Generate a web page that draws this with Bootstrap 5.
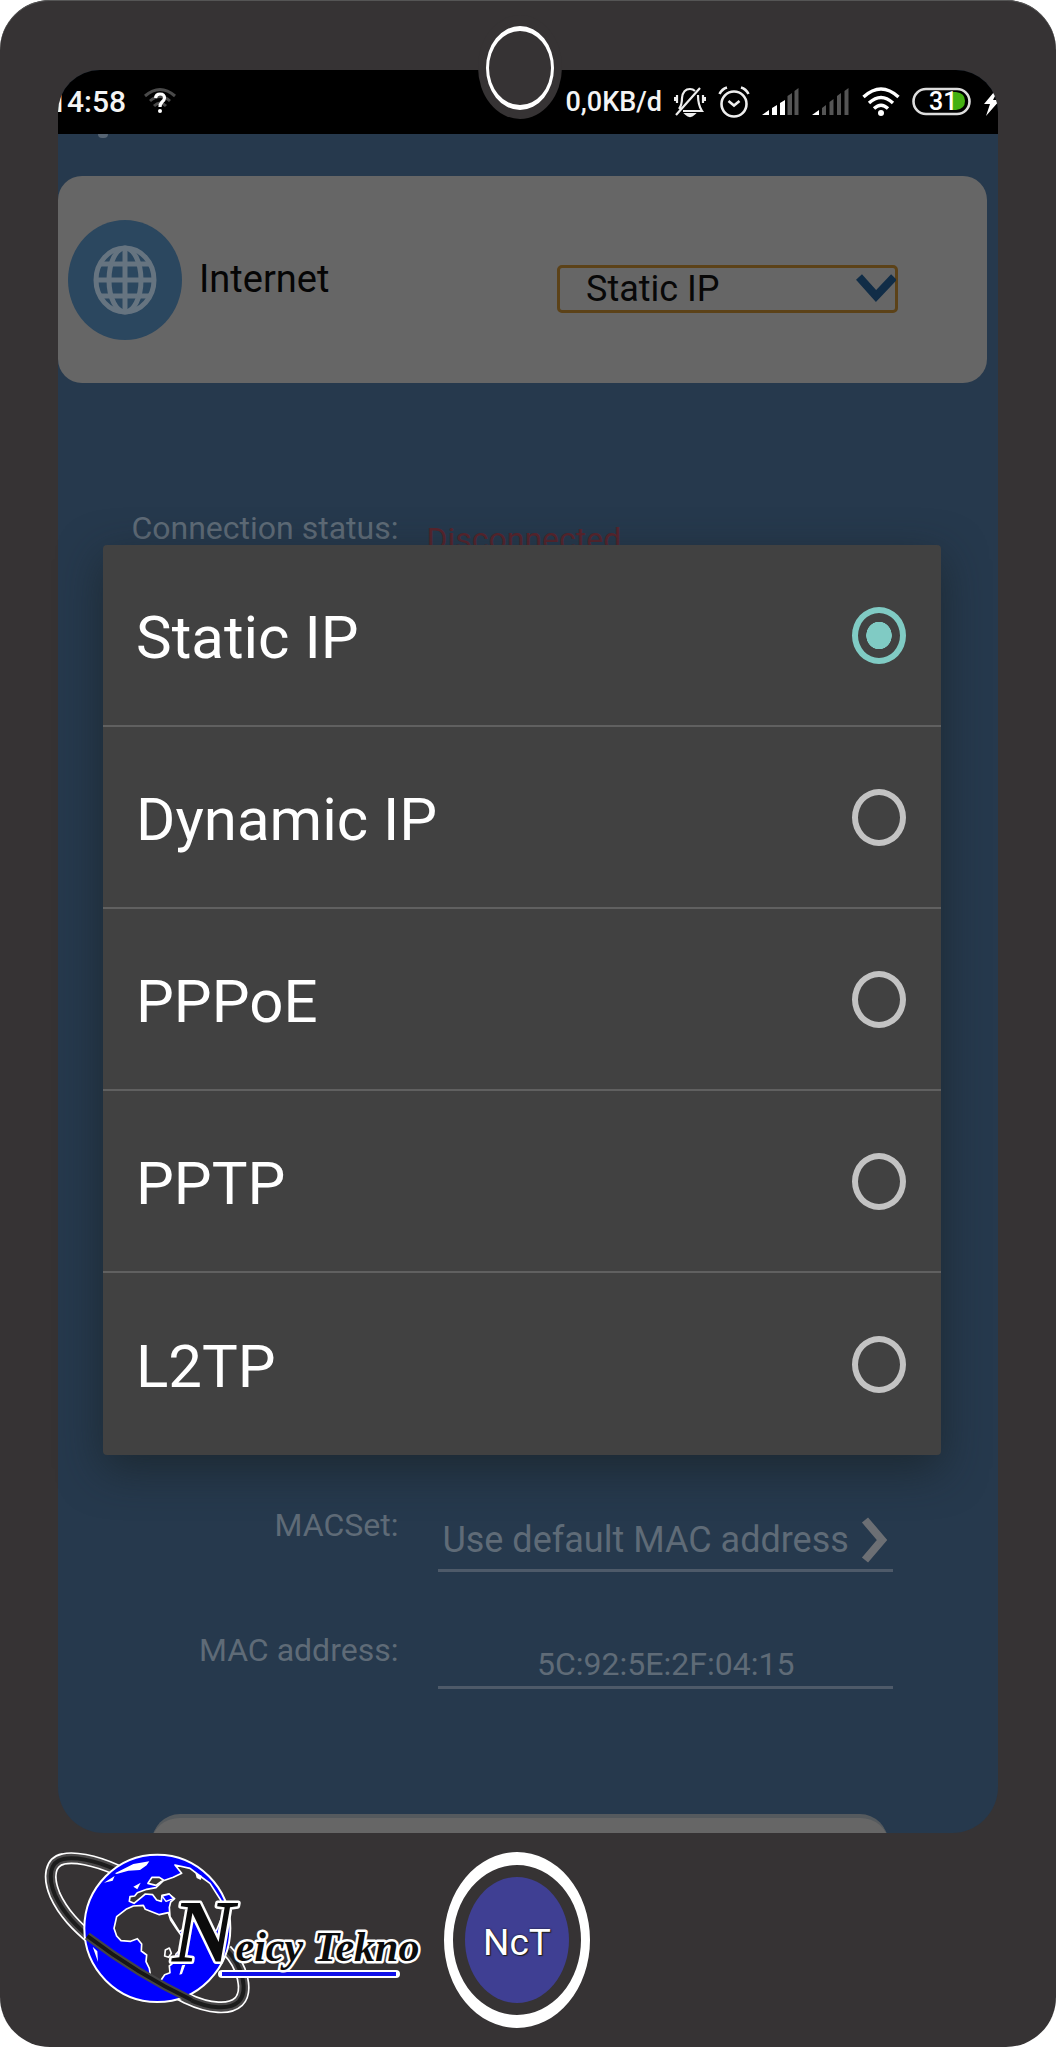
<!DOCTYPE html>
<html lang="en">
<head>
<meta charset="utf-8">
<meta name="viewport" content="width=device-width, initial-scale=1">
<title>Internet settings</title>
<link rel="stylesheet" href="https://cdn.jsdelivr.net/npm/bootstrap@5.3.0/dist/css/bootstrap.min.css">
<style>
body{background:#fff;font-family:Roboto,"Liberation Sans",sans-serif;margin:0}
.phone{background:#363334;border-radius:50px;padding:70px 58px 0;box-shadow:inset 0 1px #555;min-height:2047px}
.screen{background:#26394d;border-radius:42px 42px 46px 46px;overflow:hidden;height:1763px}
.statusbar{background:#000;height:64px;color:#f4f4f4;font-size:27px;font-weight:500;line-height:32px}
.clock{margin-left:-8px;font-size:30px}
.icons{gap:12px}
.lens{width:84px;height:104px;top:15px;left:calc(50% - 50px);border-radius:50%;background:#363334;padding:11px 8px 9px}
.lens-ring{border:solid #fff;border-width:5px 3px;border-radius:50%;height:84px}
.back-tip{width:10px;height:4px;margin-left:40px;border-radius:0 0 5px 5px;background:#566473}
.panel{background:#666;border-radius:24px;margin:38px 11px 0 0;height:207px;padding:0 89px 0 10px}
.globe-badge{width:114px;height:120px;border-radius:50%;background:#2b475f}
.title-text{font-size:38px;line-height:44px;color:#050505;margin:-2px 0 0 17px;font-weight:400}
.mode-select{width:341px;margin-top:18px}
.mode-select select{height:48px;font-size:36px;line-height:40px;padding:0 0 0 26px;background:transparent;border:3px solid #5c4218;border-radius:5px;color:#080808;appearance:none}
.mode-select svg{right:2px;top:9px}
.form-line{display:grid;grid-template-columns:340fr 454fr;column-gap:40px;padding-right:105px}
.form-line label,.form-line .cap{font-size:32px;line-height:38px;color:#5f6b77;text-align:right}
.first-line{grid-template-columns:340fr 466fr;column-gap:28px;margin-top:126px;height:997px}
.state{font-size:32px;line-height:38px;color:#58242c;padding-top:11px}
.pick{margin-top:12px;height:54px;border:0;border-bottom:3px solid #4e5a69;border-radius:0;background:none;color:#5f6b77;font-size:36px;line-height:44px;padding:0 4px 7px}
.mac-line{margin-top:59px}
.mac-line input{margin-top:14px;height:44px;padding:0 0 3px;border:0;border-bottom:3px solid #4e5a69;border-radius:0;background:none;color:#5f6b77;font-size:32px;line-height:38px;text-align:center}
.save{height:60px;margin:125px 110px 0 94px;background:#666;border:0;border-top:4px solid #555a5e;border-radius:28px;display:block}
.choices{top:545px;left:103px;right:115px;height:910px;border-radius:4px;background:#414141;box-shadow:0 14px 44px rgba(24,34,38,.7)}
.choice{height:182px;border:0;border-bottom:2px solid #606060;background:transparent;color:#fff;padding:0 35px 0 33px}
.choice:last-child{border:0}
.choice label{font-size:60px;line-height:70px;padding-top:6px}
.choice input[type=radio]{width:54px;height:57px;margin:0;border:6px solid #c3c3c3;border-radius:50%;background:transparent;appearance:none}
.choice input[type=radio]:checked{border-color:#80cbc4;background:radial-gradient(ellipse 13px 14px,#80cbc4 96%,transparent 100%)}
.foot{padding:19px 0 0;margin-left:-14px}
.home{width:146px;height:176px;border-radius:50%;border:solid #fff;border-width:13px 9px;background:#363334;padding:12px}
.home span{background:#3f3f93;border-radius:50%;color:#fff;font-size:37px;font-weight:400;padding-top:6px;text-shadow:0 0 2px #111,1px 1px 1px #222}
svg{display:block;flex:none}
</style>
<script src="https://cdn.jsdelivr.net/npm/bootstrap@5.3.0/dist/js/bootstrap.bundle.min.js"></script>
</head>
<body>
<div class="phone position-relative">
  <main class="screen">
    <header class="statusbar d-flex align-items-center justify-content-between">
      <div class="d-flex align-items-center">
        <span class="clock">14:58</span>
        <svg class="ms-3" width="36" height="32" viewBox="0 0 36 32" fill="none">
          <g stroke="#4a4a4a" stroke-width="3"><path d="M3 10Q18-3 33 10M8 15Q18 6 28 15M12 20Q18 14 24 20"/></g>
          <path d="M13.500 12Q14 8 18 8Q22.500 8 22.500 12Q22.500 14 20 16Q18 18 18 21" stroke="#fff" stroke-width="3.200"/><circle cx="18" cy="25" r="2" fill="#fff"/>
        </svg>
      </div>
      <div class="icons d-flex align-items-center">
        <span class="me-n2">0,0KB/d</span>
        <svg width="32" height="32" viewBox="0 0 32 32" fill="none" stroke="#eee" stroke-width="2.200">
          <path d="M5 23Q8 19 8 12Q9 3 16 3Q19 3 21 5M24 9Q24 19 28 25H9M2 29L26 2M3 9V17M0.800 11V15M29 9V17M31.200 11V15"/><path d="M12 28Q16 32 20 28Z" fill="#eee"/>
        </svg>
        <svg width="32" height="32" viewBox="0 0 32 32" fill="none" stroke="#eee" stroke-width="2.600">
          <circle cx="16" cy="18" r="12.500"/><path d="M10.500 15L16 19.500L21.500 15M1.500 8Q4 3 9 1.500M30.500 8Q28 3 23 1.500"/>
        </svg>
        <svg width="38" height="32" viewBox="0 0 38 32"><path d="M0 29L7 24V29ZM10 22L15 19V29H10ZM18 17L23 14V29H18Z" fill="#fff"/><path d="M25.500 10L30 7V29H25.500ZM32.500 5L36.500 2V29H32.500Z" fill="#555"/></svg>
        <svg width="38" height="32" viewBox="0 0 38 32"><path d="M0 29L7 24V29Z" fill="#fff"/><path d="M10 22L14 19V29H10ZM17.500 16L21.500 13V29H17.500ZM25 10L29 7V29H25ZM32.500 5L36.500 2V29H32.500Z" fill="#555"/></svg>
        <svg width="38" height="32" viewBox="0 0 38 32" fill="none" stroke="#fff" stroke-width="3.400"><path d="M1.500 11Q19-5 36.500 11M7 17Q19 6 31 17M12 22.500Q19 16 26 22.500"/><circle cx="19" cy="27" r="3" fill="#fff" stroke="none"/></svg>
        <svg width="60" height="32" viewBox="0 0 60 32">
          <path d="M38 6H44Q53 7 53 15Q53 23 44 24H38Z" fill="#44b012"/>
          <rect x="1.500" y="3" width="56" height="25" rx="12.500" fill="none" stroke="#ddd" stroke-width="2.600"/>
          <text x="17" y="24" font-family="Roboto,sans-serif" font-size="25" font-weight="500" fill="#fff">31</text>
        </svg>
        <svg class="ms-n1" width="14" height="32" viewBox="0 0 14 32"><path d="M10 6L0 18H6L2 30L16 14H9L13 6Z" fill="#fff"/></svg>
      </div>
    </header>
    <div class="back-tip"></div>

    <section class="panel d-flex align-items-center">
      <div class="globe-badge d-flex align-items-center justify-content-center">
        <svg width="64" height="70" viewBox="0 0 64 70" fill="none" stroke="#667480" stroke-width="5"><ellipse cx="32" cy="35" rx="29" ry="32"/><ellipse cx="32" cy="35" rx="16" ry="32"/><path d="M32 3V67M3 35H61M8 19H56M8 51H56"/></svg>
      </div>
      <h1 class="title-text">Internet</h1>
      <div class="mode-select position-relative ms-auto">
        <select class="w-100" aria-label="Internet connection type"><option>Static IP</option><option>Dynamic IP</option><option>PPPoE</option><option>PPTP</option><option>L2TP</option></select>
        <svg class="position-absolute pe-none" width="40" height="30" viewBox="0 0 40 30"><path d="M3 3L20 22L38 3" fill="none" stroke="#112d47" stroke-width="8"/></svg>
      </div>
    </section>

    <div class="form-line first-line"><span class="cap">Connection status:</span><span class="state">Disconnected</span></div>
    <div class="form-line">
      <label for="macset">MACSet:</label>
      <button id="macset" class="pick d-flex align-items-center justify-content-between" type="button">Use default MAC address
        <svg width="28" height="46" viewBox="0 0 28 46"><path d="M4 3L21 23L4 43" fill="none" stroke="#6c6f74" stroke-width="8"/></svg></button>
    </div>
    <div class="form-line mac-line"><label for="mac">MAC address:</label><input id="mac" class="w-100" type="text" value="5C:92:5E:2F:04:15"></div>
    <div class="d-grid"><button class="save" type="button" aria-label="Save"></button></div>
  </main>

  <div class="lens position-absolute"><div class="lens-ring"></div></div>

  <div class="choices list-group position-absolute">
    <div class="choice list-group-item d-flex align-items-center justify-content-between"><label for="c1">Static IP</label><input id="c1" type="radio" name="mode" checked></div>
    <div class="choice list-group-item d-flex align-items-center justify-content-between"><label for="c2">Dynamic IP</label><input id="c2" type="radio" name="mode"></div>
    <div class="choice list-group-item d-flex align-items-center justify-content-between"><label for="c3">PPPoE</label><input id="c3" type="radio" name="mode"></div>
    <div class="choice list-group-item d-flex align-items-center justify-content-between"><label for="c4">PPTP</label><input id="c4" type="radio" name="mode"></div>
    <div class="choice list-group-item d-flex align-items-center justify-content-between"><label for="c5">L2TP</label><input id="c5" type="radio" name="mode"></div>
  </div>

  <footer class="foot d-flex">
    <svg width="400" height="176" viewBox="0 0 400 176">
      <g transform="translate(-44 -32) scale(.33333)" fill="none" stroke-linejoin="round">
        <path d="M350 150C280 118 220 110 190 117C150 125 142 170 165 225C190 280 230 320 280 362C370 430 470 490 560 535C630 568 690 570 716 545C745 515 730 440 680 390" stroke="#fff" stroke-width="36"/>
        <path d="M350 150C280 118 220 110 190 117C150 125 142 170 165 225C190 280 230 320 280 362C370 430 470 490 560 535C630 568 690 570 716 545C745 515 730 440 680 390" stroke="#4a4849" stroke-width="26"/>
        <path d="M350 150C280 118 220 110 190 117C150 125 142 170 165 225C190 280 230 320 280 362C370 430 470 490 560 535C630 568 690 570 716 545C745 515 730 440 680 390" stroke="#1c1c1c" stroke-width="12"/>
        <ellipse cx="472" cy="325" rx="219" ry="221" fill="#00f" stroke="#fff" stroke-width="6"/>
        <g fill="#363334" stroke="#fff" stroke-width="5">
          <path d="M378 268L400 258L430 256L436 268L455 275L478 284L505 278L512 300L532 330L548 352L562 352L545 385L528 402L524 425L508 438L510 458L494 464L480 485L452 470L448 445L438 425L440 405L424 393L425 372L412 356L392 364L363 362L350 348L342 325L350 290Z"/>
          <path d="M412 218L440 208L468 203L490 182L520 172L545 160L525 135L570 145L600 168L630 190L662 240L684 300L664 296L650 330L632 345L616 300L592 290L570 296L556 325L538 335L510 290L508 262L512 246L524 236L506 222L486 226L484 244L470 240L458 224L436 222L424 232L402 250L388 244L390 230L404 228Z"/>
          <path d="M444 190L456 172L478 172L490 180L468 196Z"/>
          <path d="M496 390L508 384L514 400L506 412L494 408Z"/>
        </g>
        <path d="M345 160L400 132L448 124L440 136L420 150L385 152L350 162ZM312 188L344 168L338 182ZM278 380L292 394L294 426ZM546 436L556 434L546 462L538 464ZM664 300L672 280L680 310L672 326ZM586 160L606 168L602 180L590 174ZM400 200L422 188L412 208Z" fill="#fff"/>
        <path d="M486 228L508 222L520 236L498 244Z" fill="#00f" stroke="#fff" stroke-width="4"/>
        <path d="M262 348C370 430 470 490 575 540" stroke="#454545" stroke-width="24"/>
        <path d="M262 348C370 430 470 490 575 540" stroke="#161616" stroke-width="12"/>
      </g>
      <path d="M178 122H352" stroke="#fff" stroke-width="8" stroke-linecap="round"/><path d="M178 122H352" stroke="#1010e8" stroke-width="4"/>
      <text x="128" y="109" font-family="'Liberation Serif',serif" font-weight="700" font-style="italic" fill="#0c0c0c" stroke="#fff" stroke-width="5" paint-order="stroke" stroke-linejoin="round"><tspan font-size="88">N</tspan><tspan font-size="42">eicy Tekno</tspan></text>
    </svg>
    <button class="home" type="button"><span class="w-100 h-100 d-flex align-items-center justify-content-center">NcT</span></button>
  </footer>
</div>
</body>
</html>
